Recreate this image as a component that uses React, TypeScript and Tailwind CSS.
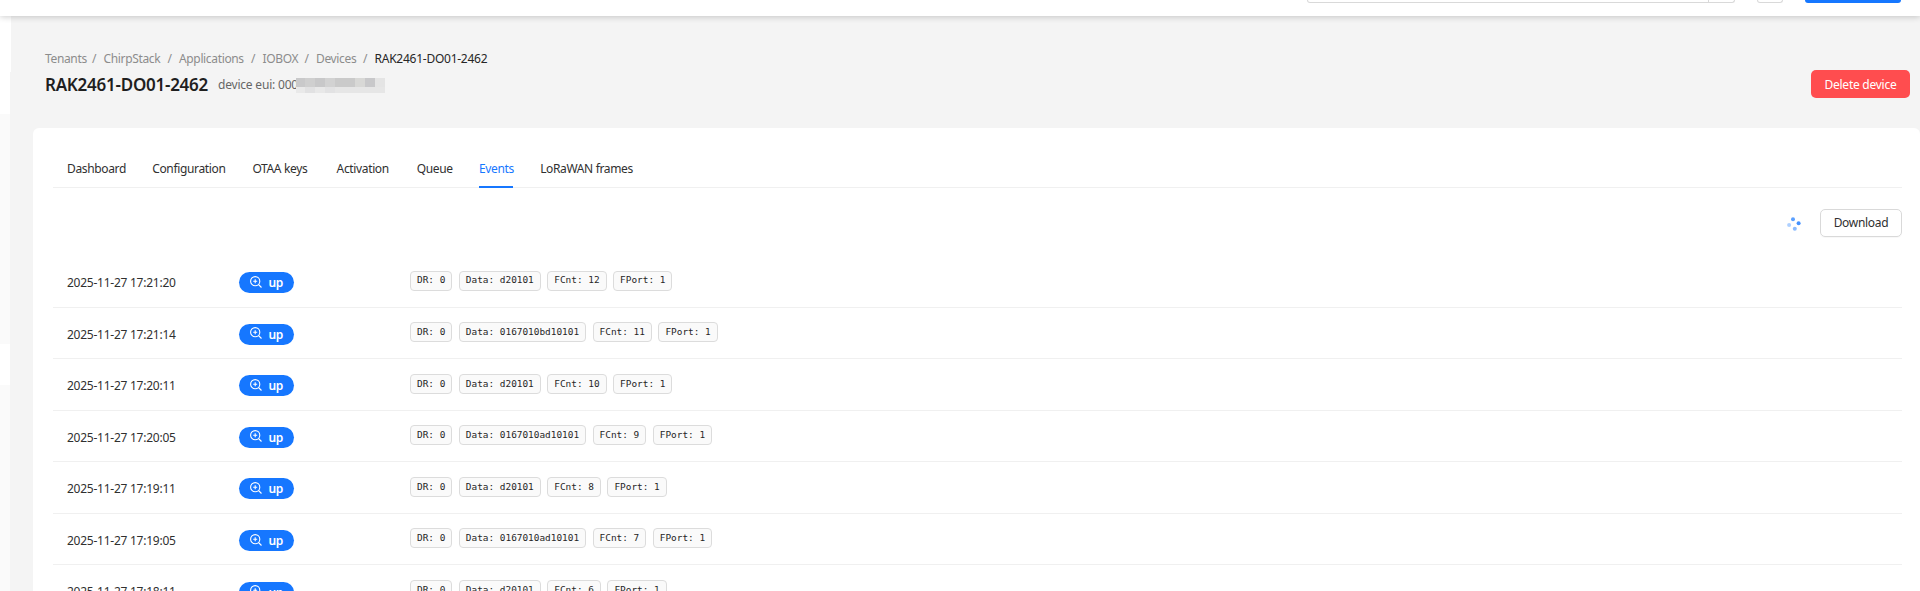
import clsx from "clsx";

const crumbs = [
	{ label: "Tenants", width: "w-[40px]" },
	{ label: "ChirpStack", width: "w-[57px]" },
	{ label: "Applications", width: "w-[65px]" },
	{ label: "IOBOX", width: "w-[35px]" },
	{ label: "Devices", width: "w-[40px]" },
];

const tabs = [
	{ label: "Dashboard", width: "w-[58px]" },
	{ label: "Configuration", width: "w-[73px]" },
	{ label: "OTAA keys", width: "w-[57px]" },
	{ label: "Activation", width: "w-[53px]" },
	{ label: "Queue", width: "w-[35px]" },
	{ label: "Events", width: "w-[34px]" },
	{ label: "LoRaWAN frames", width: "w-[93px]" },
];

const events = [
	{ time: "2025-11-27 17:21:20", data: "d20101", fCnt: 12 },
	{ time: "2025-11-27 17:21:14", data: "0167010bd10101", fCnt: 11 },
	{ time: "2025-11-27 17:20:11", data: "d20101", fCnt: 10 },
	{ time: "2025-11-27 17:20:05", data: "0167010ad10101", fCnt: 9 },
	{ time: "2025-11-27 17:19:11", data: "d20101", fCnt: 8 },
	{ time: "2025-11-27 17:19:05", data: "0167010ad10101", fCnt: 7 },
	{ time: "2025-11-27 17:18:11", data: "d20101", fCnt: 6 },
];

const ZoomIn = () => (
	<svg viewBox="0 0 12 12" className="w-3 h-3 mb-[2px]" fill="none" stroke="currentColor" strokeWidth="1.1">
		<circle cx="5.2" cy="5.2" r="4.6" />
		<path d="M3.2 5.2h4M5.2 3.2v4M8.5 8.5l3 3" />
	</svg>
);

const Spinner = () => (
	<svg viewBox="0 0 14 14" className="w-3.5 h-3.5" fill="#1677ff">
		<circle cx="6" cy="2.3" r="2" opacity="0.7" />
		<circle cx="11.6" cy="6.2" r="2" opacity="0.8" />
		<circle cx="7.8" cy="11.8" r="2" opacity="0.5" />
		<circle cx="2.1" cy="8" r="2" opacity="0.35" />
	</svg>
);

const Tag = ({ children }: { children: string }) => (
	<span className="h-[20px] px-[6px] flex items-center border border-[#dcdcdc] rounded-[4px] bg-[#fafafa] font-['DejaVu_Sans_Mono',monospace] text-[9.42px] whitespace-pre text-[#262626]">
		{children}
	</span>
);

const App = () => {
	return (
		<div className="h-[591px] w-full overflow-hidden flex flex-col bg-[#f4f4f4] font-['Noto_Sans','Open_Sans',sans-serif] text-[12px] text-[#303030] whitespace-nowrap">
			{/* TOP BAR */}
			<div className="relative z-10 h-4 shrink-0 bg-white flex items-start justify-end pr-[19px] shadow-[0_1px_6px_rgba(0,0,0,0.2)]">
				<div className="h-[3px] w-[428px] flex justify-end border border-t-0 border-[#d9d9d9] rounded-b-[5px] mr-[22px]">
					<div className="w-[26px] border-l border-[#d9d9d9]" />
				</div>
				<div className="h-[3px] w-[26px] border border-t-0 border-[#d9d9d9] rounded-b-[5px] mr-[22px]" />
				<div className="h-[3px] w-[96px] bg-[#1677ff] rounded-b-[5px]" />
			</div>
			<div className="flex flex-1 min-h-0">
				{/* SIDEBAR */}
				<div className="w-[11px] shrink-0 flex flex-col">
					<div className="h-[56px] bg-white" />
					<div className="h-[42px] w-[10px] bg-white" />
					<div className="h-[230px] w-[10px] bg-[#fafafa]" />
					<div className="h-[41px] w-[10px] bg-white" />
					<div className="flex-1 w-[10px] bg-[#fafafa]" />
				</div>
				{/* CONTENT */}
				<div className="flex-1 min-w-0 pl-[22px] flex flex-col">
					<div className="h-[112px] shrink-0 pl-[12px] pr-[10px] pt-[33px]">
						<div className="flex h-[19px] items-center text-[#8c8c8c]">
							{crumbs.map((crumb) => (
								<div key={crumb.label} className="flex">
									<span className={clsx(crumb.width, "tracking-[-0.35px]")}>{crumb.label}</span>
									<span className="w-[18.5px] text-center">/</span>
								</div>
							))}
							<span className="text-[#262626] tracking-[-0.25px]">RAK2461-DO01-2462</span>
						</div>
						<div className="flex h-[28px] items-center mt-[2px]">
							<h1 className="w-[173px] pt-[2px] text-[17px] font-semibold text-[#1f1f1f] tracking-[-0.25px]">RAK2461-DO01-2462</h1>
							<span className="w-[78px] pt-px text-[#666] tracking-[-0.2px]">device eui: 000</span>
							<div className="w-[89px] h-[15px] mt-[3px]">
								<div className="flex h-[9px]">
									<div className="w-[9px] bg-[#c9c9ca]" />
									<div className="w-[10px] bg-[#cfcfcf]" />
									<div className="w-[10px] bg-[#c8c8c9]" />
									<div className="w-[10px] bg-[#d2d2d2]" />
									<div className="w-[20px] bg-[#cacaca]" />
									<div className="w-[10px] bg-[#d8d8d6]" />
									<div className="w-[10px] bg-[#c8c8ca]" />
									<div className="flex-1 bg-[#e4e4e4]" />
								</div>
								<div className="flex h-[6px]">
									<div className="w-[9px] bg-[#e9e9e9]" />
									<div className="w-[10px] bg-[#e1e1e2]" />
									<div className="w-[10px] bg-[#e8e8e8]" />
									<div className="w-[10px] bg-[#e2e2e3]" />
									<div className="flex-1 bg-[#e6e6e6]" />
								</div>
							</div>
							<button className="ml-auto w-[99px] h-[28px] pt-px rounded-[5px] bg-[#ff4d4f] text-white tracking-[-0.25px]">Delete device</button>
						</div>
					</div>
					{/* CARD */}
					<div className="flex-1 min-h-0 bg-white rounded-t-[6px] pl-5 pr-[18px]">
						<div className="h-[60px] pl-[14px] flex gap-[27.2px] border-b border-[#f0f0f0]">
							{tabs.map((tab) => (
								<div
									key={tab.label}
									className={clsx(
										tab.width,
										"h-[60px] pt-[32px] leading-[18px] tracking-[-0.35px]",
										tab.label === "Events" && "text-[#1677ff] border-b-2 border-[#1677ff]"
									)}
								>
									{tab.label}
								</div>
							))}
						</div>
						<div className="h-[68px] pt-[21px] flex items-start justify-end">
							<div className="mt-[8px] mr-[19px]"><Spinner /></div>
							<button className="w-[82px] h-[28px] rounded-[5px] border border-[#d9d9d9] shadow-[0_1px_1px_rgba(0,0,0,0.03)] tracking-[-0.3px]">Download</button>
						</div>
						{events.map((event) => (
							<div key={event.time} className="h-[51.55px] pl-[14px] flex items-start border-b border-[#f0f0f0]">
								<span className="w-[172px] pt-[18px] leading-[18px] tracking-[-0.25px]">{event.time}</span>
								<button className="w-[55px] h-[21px] mt-[16.3px] pl-[11px] rounded-full bg-[#1677ff] text-white flex items-center gap-[6.5px] font-semibold tracking-[-0.4px]">
									<ZoomIn />
									<span className="pt-px">up</span>
								</button>
								<div className="flex gap-[6.5px] ml-[116px] mt-[14.5px]">
									<Tag>DR: 0</Tag>
									<Tag>{`Data: ${event.data}`}</Tag>
									<Tag>{`FCnt: ${event.fCnt}`}</Tag>
									<Tag>FPort: 1</Tag>
								</div>
							</div>
						))}
					</div>
				</div>
			</div>
		</div>
	);
};

export default App;
